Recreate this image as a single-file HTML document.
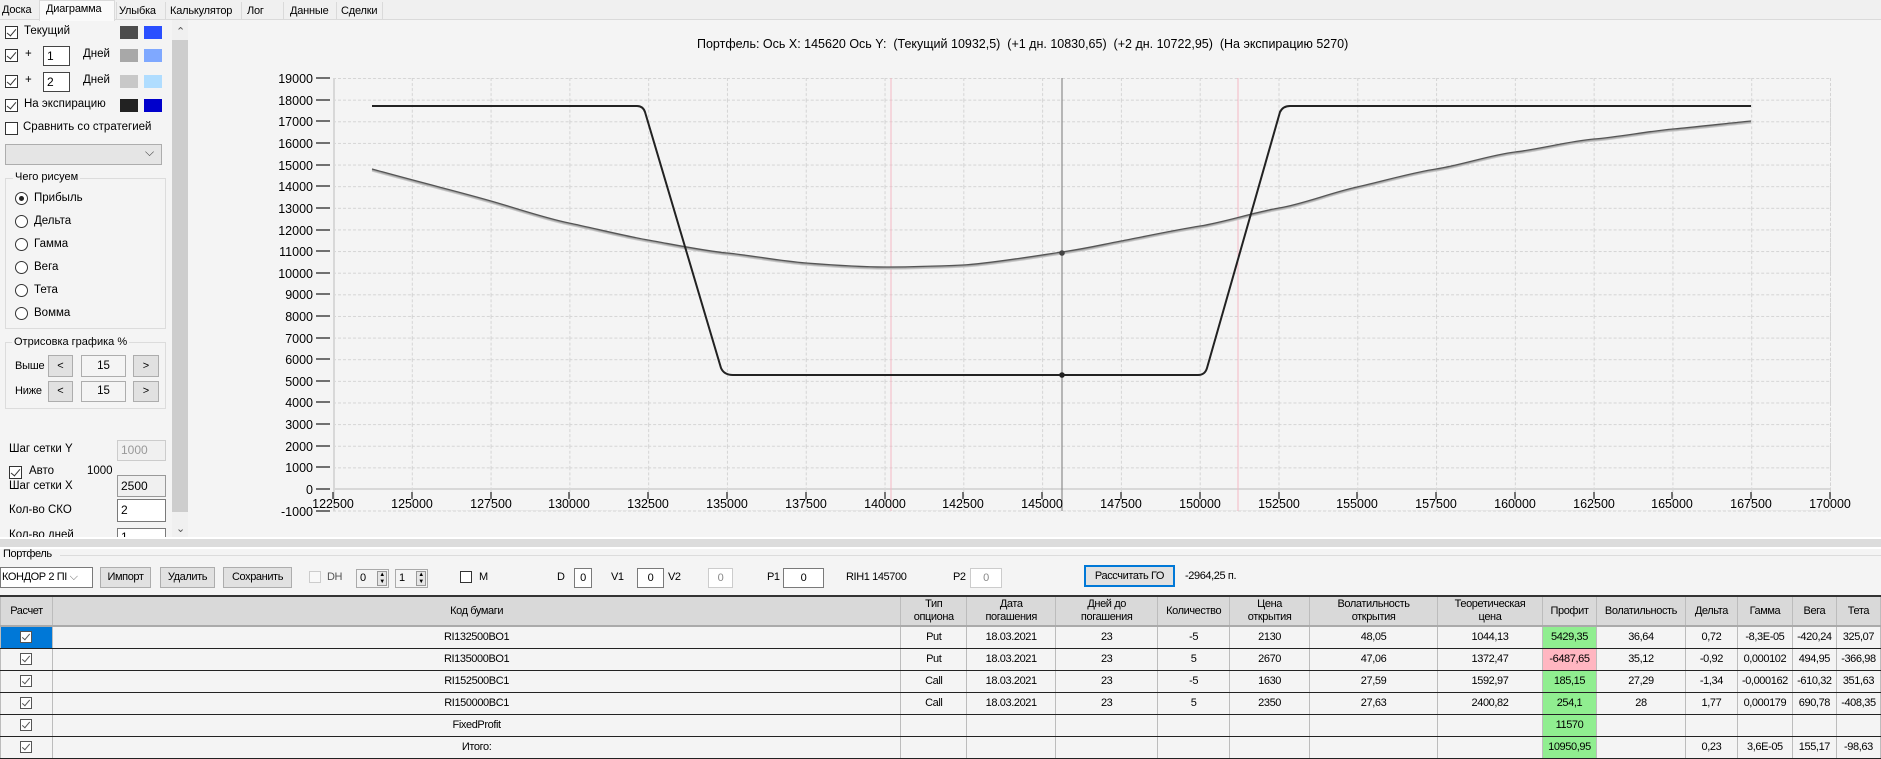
<!DOCTYPE html>
<html><head><meta charset="utf-8">
<style>
*{box-sizing:border-box;margin:0;padding:0}
body{width:1881px;height:756px;overflow:hidden;background:#f4f4f4;font-family:"Liberation Sans","DejaVu Sans",sans-serif;font-size:11.5px;color:#000;position:relative}
.a{position:absolute;white-space:nowrap}
.t{font-size:11px;letter-spacing:-0.2px}
.cb{position:absolute;width:13px;height:13px;border:1px solid #333;background:#fff}
.cb.k::after{content:"";position:absolute;left:3px;top:0px;width:4px;height:8px;border:solid #333;border-width:0 1.3px 1.3px 0;transform:rotate(40deg)}
.rb{position:absolute;width:13px;height:13px;border:1px solid #333;border-radius:50%;background:#fff}
.sw{position:absolute;width:18px;height:13px}
.in{position:absolute;background:#fff;border:1px solid #7a7a7a;padding-left:3px;font-size:12px}
.btn{position:absolute;background:#e1e1e1;border:1px solid #adadad;text-align:center;font-size:11px}
.n{font-size:11px;letter-spacing:-0.4px}
table{position:absolute;left:0;top:595px;border-collapse:collapse;table-layout:fixed;font-size:11px;letter-spacing:-0.4px;border-top:2px solid #333}
td,th{border:1px solid #bcbcbc;border-bottom:1.5px solid #222;text-align:center;height:22px;padding:0;overflow:hidden;white-space:nowrap;background:#f4f4f4}
th{background:#d9d9d9;font-weight:normal;height:30px;line-height:13px;border-bottom:2px solid #aaa}
.g{background:#90ee90!important}.r{background:#ffb6c1!important}
.tcb{display:inline-block;width:12px;height:12px;border:1px solid #555;background:#fff;position:relative;vertical-align:middle}
.tcb::after{content:"";position:absolute;left:3px;top:0;width:3px;height:7px;border:solid #555;border-width:0 1px 1px 0;transform:rotate(40deg)}
</style></head><body>
<!-- tabs -->
<div class="a" style="left:0;top:0;width:1881px;height:20px;background:#f0f0f0;border-bottom:1px solid #dadada"></div>
<div class="a t" style="left:2px;top:4px">Доска</div>
<div class="a" style="left:39px;top:0;width:76px;height:21px;background:#fafafa;border:1px solid #dadada;border-bottom:none"></div>
<div class="a t" style="left:46px;top:3px">Диаграмма</div>
<div class="a" style="left:116px;top:2px;width:1px;height:17px;background:#dadada"></div>
<div class="a t" style="left:119px;top:5px">Улыбка</div>
<div class="a" style="left:165px;top:2px;width:1px;height:17px;background:#dadada"></div>
<div class="a t" style="left:170px;top:5px">Калькулятор</div>
<div class="a" style="left:241px;top:2px;width:1px;height:17px;background:#dadada"></div>
<div class="a t" style="left:247px;top:5px">Лог</div>
<div class="a" style="left:283px;top:2px;width:1px;height:17px;background:#dadada"></div>
<div class="a t" style="left:290px;top:5px">Данные</div>
<div class="a" style="left:336px;top:2px;width:1px;height:17px;background:#dadada"></div>
<div class="a t" style="left:341px;top:5px">Сделки</div>
<div class="a" style="left:382px;top:2px;width:1px;height:17px;background:#dadada"></div>

<!-- left panel -->
<div class="cb k" style="left:5px;top:26px"></div><div class="a" style="left:24px;top:25px">Текущий</div>
<div class="sw" style="left:120px;top:26px;background:#4d4d4d"></div><div class="sw" style="left:144px;top:26px;background:#2a4fff"></div>
<div class="cb k" style="left:5px;top:49px"></div><div class="a" style="left:25px;top:48px">+</div>
<div class="in" style="left:43px;top:46px;width:27px;height:20px;border-color:#444;line-height:18px">1</div><div class="a" style="left:83px;top:48px">Дней</div>
<div class="sw" style="left:120px;top:49px;background:#a8a8a8"></div><div class="sw" style="left:144px;top:49px;background:#7fa8ff"></div>
<div class="cb k" style="left:5px;top:75px"></div><div class="a" style="left:25px;top:74px">+</div>
<div class="in" style="left:43px;top:72px;width:27px;height:20px;border-color:#444;line-height:18px">2</div><div class="a" style="left:83px;top:74px">Дней</div>
<div class="sw" style="left:120px;top:75px;background:#c8c8c8"></div><div class="sw" style="left:144px;top:75px;background:#b0ddff"></div>
<div class="cb k" style="left:5px;top:99px"></div><div class="a" style="left:24px;top:98px">На экспирацию</div>
<div class="sw" style="left:120px;top:99px;background:#222"></div><div class="sw" style="left:144px;top:99px;background:#0000cc"></div>
<div class="cb" style="left:5px;top:122px"></div><div class="a" style="left:23px;top:121px">Сравнить со стратегией</div>
<div class="a" style="left:5px;top:144px;width:157px;height:21px;background:#e5e5e5;border:1px solid #adadad"></div>
<div class="a" style="left:145px;top:145px;font-size:12px;color:#444">⌵</div>
<div class="a" style="left:5px;top:178px;width:161px;height:151px;border:1px solid #dcdcdc"></div>
<div class="a" style="left:13px;top:171px;background:#f4f4f4;padding:0 2px;font-size:11px">Чего рисуем</div>
<div class="rb" style="left:15px;top:192px"></div><div class="a" style="left:19px;top:196px;width:5px;height:5px;border-radius:50%;background:#222"></div><div class="a" style="left:34px;top:192px">Прибыль</div>
<div class="rb" style="left:15px;top:215px"></div><div class="a" style="left:34px;top:215px">Дельта</div>
<div class="rb" style="left:15px;top:238px"></div><div class="a" style="left:34px;top:238px">Гамма</div>
<div class="rb" style="left:15px;top:261px"></div><div class="a" style="left:34px;top:261px">Вега</div>
<div class="rb" style="left:15px;top:284px"></div><div class="a" style="left:34px;top:284px">Тета</div>
<div class="rb" style="left:15px;top:307px"></div><div class="a" style="left:34px;top:307px">Вомма</div>
<div class="a" style="left:5px;top:342px;width:161px;height:67px;border:1px solid #dcdcdc"></div>
<div class="a" style="left:12px;top:336px;background:#f4f4f4;padding:0 2px;font-size:11px">Отрисовка графика %</div>
<div class="a t" style="left:15px;top:360px">Выше</div>
<div class="btn" style="left:48px;top:355px;width:25px;height:22px;line-height:20px">&lt;</div>
<div class="a" style="left:81px;top:355px;width:45px;height:22px;border:1px solid #adadad;text-align:center;line-height:20px">15</div>
<div class="btn" style="left:133px;top:355px;width:26px;height:22px;line-height:20px">&gt;</div>
<div class="a t" style="left:15px;top:385px">Ниже</div>
<div class="btn" style="left:48px;top:381px;width:25px;height:21px;line-height:19px">&lt;</div>
<div class="a" style="left:81px;top:381px;width:45px;height:21px;border:1px solid #adadad;text-align:center;line-height:19px">15</div>
<div class="btn" style="left:133px;top:381px;width:26px;height:21px;line-height:19px">&gt;</div>
<div class="a" style="left:9px;top:443px">Шаг сетки Y</div>
<div class="in" style="left:117px;top:440px;width:49px;height:21px;background:#f0f0f0;border-color:#ccc;color:#999;line-height:19px">1000</div>
<div class="cb k" style="left:9px;top:466px"></div><div class="a" style="left:29px;top:465px">Авто</div><div class="a" style="left:87px;top:465px">1000</div>
<div class="a" style="left:9px;top:480px">Шаг сетки X</div>
<div class="in" style="left:117px;top:475px;width:49px;height:22px;background:#f0f0f0;border-color:#999;line-height:20px">2500</div>
<div class="a" style="left:9px;top:504px">Кол-во СКО</div>
<div class="in" style="left:117px;top:499px;width:49px;height:23px;line-height:21px">2</div>
<div class="a" style="left:9px;top:529px;height:8px;overflow:hidden">Кол-во дней</div>
<div class="in" style="left:117px;top:528px;width:49px;height:9px;border-bottom:none;line-height:17px;overflow:hidden">1</div>
<div class="a" style="left:172px;top:20px;width:16px;height:517px;background:#f0f0f0"></div>
<div class="a" style="left:172px;top:40px;width:16px;height:472px;background:#cdcdcd"></div>
<div class="a" style="left:176px;top:25px;font-size:11px;color:#555">⌃</div>
<div class="a" style="left:176px;top:522px;font-size:11px;color:#555">⌄</div>
<!-- splitter -->
<div class="a" style="left:0;top:537px;width:1881px;height:2px;background:#fff"></div>
<div class="a" style="left:0;top:539px;width:1881px;height:8px;background:#dcdcdc"></div>
<div class="a" style="left:0;top:547px;width:1881px;height:2px;background:#fff"></div>
<div class="a" style="left:60px;top:555px;width:1821px;height:1px;background:#dcdcdc"></div>
<div class="a n" style="left:3px;top:548px">Портфель</div>

<!-- chart -->
<div class="a" style="left:697px;top:37px;font-size:12.5px">Портфель: Ось X: 145620 Ось Y:&nbsp; (Текущий 10932,5)&nbsp; (+1 дн. 10830,65)&nbsp; (+2 дн. 10722,95)&nbsp; (На экспирацию 5270)</div>
<svg class="a" style="left:0;top:0" width="1881" height="540" xmlns="http://www.w3.org/2000/svg">
<defs><pattern id="gr" x="333" y="78.03" width="78.79" height="21.63" patternUnits="userSpaceOnUse">
<path d="M0.5 0V21.63M0 0.5H78.79" stroke="#d4d4d4" stroke-width="1" stroke-dasharray="3 2" fill="none"/></pattern></defs>
<rect x="333" y="78" width="1498" height="433" fill="url(#gr)"/>
<line x1="1830.5" y1="78" x2="1830.5" y2="511" stroke="#d4d4d4" stroke-dasharray="3 2"/>
<line x1="333" y1="511" x2="1830" y2="511" stroke="#d4d4d4" stroke-dasharray="3 2"/>
<line x1="333" y1="489" x2="1830" y2="489" stroke="#d8d8d8" stroke-width="2"/>
<line x1="334" y1="78" x2="334" y2="511" stroke="#d8d8d8" stroke-width="2"/>
<line x1="891" y1="78" x2="891" y2="511" stroke="#f4b8c4"/>
<line x1="1238" y1="78" x2="1238" y2="511" stroke="#f4b8c4"/>
<line x1="1062" y1="78" x2="1062" y2="511" stroke="#8c8c8c" stroke-width="1.2"/>
<g stroke="#222" stroke-width="1.2">
<path d="M316 78H330M316 100H330M316 121H330M316 143H330M316 165H330M316 186H330M316 208H330M316 230H330M316 251H330M316 273H330M316 294H330M316 316H330M316 338H330M316 359H330M316 381H330M316 402H330M316 424H330M316 446H330M316 467H330M316 489H330M316 511H330"/>
<path d="M333 492V499M412 492V499M491 492V499M569 492V499M648 492V499M727 492V499M806 492V499M885 492V499M963 492V499M1042 492V499M1121 492V499M1200 492V499M1279 492V499M1357 492V499M1436 492V499M1515 492V499M1594 492V499M1672 492V499M1751 492V499M1830 492V499"/>
</g>
<g font-family="Liberation Sans, sans-serif" font-size="12.5" text-anchor="end" fill="#000">
<text x="313" y="83">19000</text><text x="313" y="105">18000</text><text x="313" y="126">17000</text><text x="313" y="148">16000</text><text x="313" y="170">15000</text><text x="313" y="191">14000</text><text x="313" y="213">13000</text><text x="313" y="235">12000</text><text x="313" y="256">11000</text><text x="313" y="278">10000</text><text x="313" y="299">9000</text><text x="313" y="321">8000</text><text x="313" y="343">7000</text><text x="313" y="364">6000</text><text x="313" y="386">5000</text><text x="313" y="407">4000</text><text x="313" y="429">3000</text><text x="313" y="451">2000</text><text x="313" y="472">1000</text><text x="313" y="494">0</text><text x="313" y="516">-1000</text>
</g>
<g font-family="Liberation Sans, sans-serif" font-size="12.5" text-anchor="middle" fill="#000">
<text x="333" y="508">122500</text><text x="412" y="508">125000</text><text x="491" y="508">127500</text><text x="569" y="508">130000</text><text x="648" y="508">132500</text><text x="727" y="508">135000</text><text x="806" y="508">137500</text><text x="885" y="508">140000</text><text x="963" y="508">142500</text><text x="1042" y="508">145000</text><text x="1121" y="508">147500</text><text x="1200" y="508">150000</text><text x="1279" y="508">152500</text><text x="1357" y="508">155000</text><text x="1436" y="508">157500</text><text x="1515" y="508">160000</text><text x="1594" y="508">162500</text><text x="1672" y="508">165000</text><text x="1751" y="508">167500</text><text x="1830" y="508">170000</text>
</g>
<g fill="none" stroke-width="1.3">
<path stroke="#c8c8c8" transform="translate(0,2)" d="M372 169 C430 185,460 192,491 201 S545 218,569 223 S625 236,648 240 S705 251,727 253 S780 261,806 263 S860 267,885 267 S940 266,963 265 S1035 256,1062 252 S1100 245,1121 241 S1175 230,1200 226 S1255 212,1279 208 S1330 193,1357 187 S1410 173,1436 169 S1490 155,1515 152 S1570 141,1594 139 S1650 131,1673 129 S1730 123,1751 121"/>
<path stroke="#a8a8a8" transform="translate(0,1)" d="M372 169 C430 185,460 192,491 201 S545 218,569 223 S625 236,648 240 S705 251,727 253 S780 261,806 263 S860 267,885 267 S940 266,963 265 S1035 256,1062 252 S1100 245,1121 241 S1175 230,1200 226 S1255 212,1279 208 S1330 193,1357 187 S1410 173,1436 169 S1490 155,1515 152 S1570 141,1594 139 S1650 131,1673 129 S1730 123,1751 121"/>
<path stroke="#555" d="M372 169 C430 185,460 192,491 201 S545 218,569 223 S625 236,648 240 S705 251,727 253 S780 261,806 263 S860 267,885 267 S940 266,963 265 S1035 256,1062 252 S1100 245,1121 241 S1175 230,1200 226 S1255 212,1279 208 S1330 193,1357 187 S1410 173,1436 169 S1490 155,1515 152 S1570 141,1594 139 S1650 131,1673 129 S1730 123,1751 121"/>
<path stroke="#222" stroke-width="2" d="M372 106H637 Q643 106,645 112 L721 368 Q724 375,733 375 H1198 Q1205 375,1207 368 L1280 112 Q1283 106,1290 106 H1751"/>
</g>
<circle cx="1062" cy="253" r="2.8" fill="#444"/>
<circle cx="1062" cy="375" r="2.8" fill="#222"/>
</svg>

<!-- toolbar -->
<div class="a n" style="left:0;top:567px;width:93px;height:21px;background:#fff;border:1px solid #7a7a7a;line-height:19px;padding-left:1px">КОНДОР 2 ПІ <span style="color:#666">⌵</span></div>
<div class="btn n" style="left:100px;top:567px;width:51px;height:21px;line-height:19px">Импорт</div>
<div class="btn n" style="left:160px;top:567px;width:55px;height:21px;line-height:19px">Удалить</div>
<div class="btn n" style="left:223px;top:567px;width:69px;height:21px;line-height:19px">Сохранить</div>
<div class="a" style="left:309px;top:571px;width:12px;height:12px;border:1px solid #ccc;background:#f8f8f8"></div>
<div class="a n" style="left:327px;top:571px;color:#555">DH</div>
<div class="a n" style="left:356px;top:569px;width:33px;height:19px;border:1px solid #aaa;padding-left:3px;line-height:17px">0<span style="position:absolute;right:1px;top:1px;width:10px;height:15px;background:#e5e5e5;border:1px solid #999;font-size:6px;line-height:7px;text-align:center">▲<br>▼</span></div>
<div class="a n" style="left:395px;top:569px;width:33px;height:19px;border:1px solid #aaa;padding-left:3px;line-height:17px">1<span style="position:absolute;right:1px;top:1px;width:10px;height:15px;background:#e5e5e5;border:1px solid #999;font-size:6px;line-height:7px;text-align:center">▲<br>▼</span></div>
<div class="a" style="left:460px;top:571px;width:12px;height:12px;border:1px solid #333;background:#fff"></div>
<div class="a n" style="left:479px;top:571px">M</div>
<div class="a n" style="left:557px;top:571px">D</div>
<div class="in n" style="left:574px;top:568px;width:18px;height:20px;text-align:center;padding:0;line-height:18px">0</div>
<div class="a n" style="left:611px;top:571px">V1</div>
<div class="in n" style="left:637px;top:568px;width:27px;height:20px;text-align:center;padding:0;line-height:18px">0</div>
<div class="a n" style="left:668px;top:571px">V2</div>
<div class="in n" style="left:708px;top:568px;width:25px;height:20px;text-align:center;padding:0;line-height:18px;border-color:#ccc;color:#888">0</div>
<div class="a n" style="left:767px;top:571px">P1</div>
<div class="in n" style="left:783px;top:568px;width:41px;height:20px;text-align:center;padding:0;line-height:18px">0</div>
<div class="a n" style="left:846px;top:571px">RIH1 145700</div>
<div class="a n" style="left:953px;top:571px">P2</div>
<div class="in n" style="left:970px;top:568px;width:32px;height:20px;text-align:center;padding:0;line-height:18px;border-color:#ccc;color:#888">0</div>
<div class="btn n" style="left:1084px;top:565px;width:91px;height:22px;line-height:18px;border:2px solid #0078d7">Рассчитать ГО</div>
<div class="a n" style="left:1185px;top:570px">-2964,25 п.</div>

<!-- table -->
<table>
<colgroup><col style="width:52px"><col style="width:849px"><col style="width:66px"><col style="width:89px"><col style="width:102px"><col style="width:72px"><col style="width:80px"><col style="width:128px"><col style="width:105px"><col style="width:54px"><col style="width:89px"><col style="width:52px"><col style="width:55px"><col style="width:44px"><col style="width:44px"></colgroup>
<tr><th>Расчет</th><th>Код бумаги</th><th>Тип<br>опциона</th><th>Дата<br>погашения</th><th>Дней до<br>погашения</th><th>Количество</th><th>Цена<br>открытия</th><th>Волатильность<br>открытия</th><th>Теоретическая<br>цена</th><th>Профит</th><th>Волатильность</th><th>Дельта</th><th>Гамма</th><th>Вега</th><th>Тета</th></tr>
<tr><td style="background:#0078d7"><span class="tcb"></span></td><td>RI132500BO1</td><td>Put</td><td>18.03.2021</td><td>23</td><td>-5</td><td>2130</td><td>48,05</td><td>1044,13</td><td class="g">5429,35</td><td>36,64</td><td>0,72</td><td>-8,3E-05</td><td>-420,24</td><td>325,07</td></tr>
<tr><td><span class="tcb"></span></td><td>RI135000BO1</td><td>Put</td><td>18.03.2021</td><td>23</td><td>5</td><td>2670</td><td>47,06</td><td>1372,47</td><td class="r">-6487,65</td><td>35,12</td><td>-0,92</td><td>0,000102</td><td>494,95</td><td>-366,98</td></tr>
<tr><td><span class="tcb"></span></td><td>RI152500BC1</td><td>Call</td><td>18.03.2021</td><td>23</td><td>-5</td><td>1630</td><td>27,59</td><td>1592,97</td><td class="g">185,15</td><td>27,29</td><td>-1,34</td><td>-0,000162</td><td>-610,32</td><td>351,63</td></tr>
<tr><td><span class="tcb"></span></td><td>RI150000BC1</td><td>Call</td><td>18.03.2021</td><td>23</td><td>5</td><td>2350</td><td>27,63</td><td>2400,82</td><td class="g">254,1</td><td>28</td><td>1,77</td><td>0,000179</td><td>690,78</td><td>-408,35</td></tr>
<tr><td><span class="tcb"></span></td><td>FixedProfit</td><td></td><td></td><td></td><td></td><td></td><td></td><td></td><td class="g">11570</td><td></td><td></td><td></td><td></td><td></td></tr>
<tr><td><span class="tcb"></span></td><td>Итого:</td><td></td><td></td><td></td><td></td><td></td><td></td><td></td><td class="g">10950,95</td><td></td><td>0,23</td><td>3,6E-05</td><td>155,17</td><td>-98,63</td></tr>
</table>
</body></html>
